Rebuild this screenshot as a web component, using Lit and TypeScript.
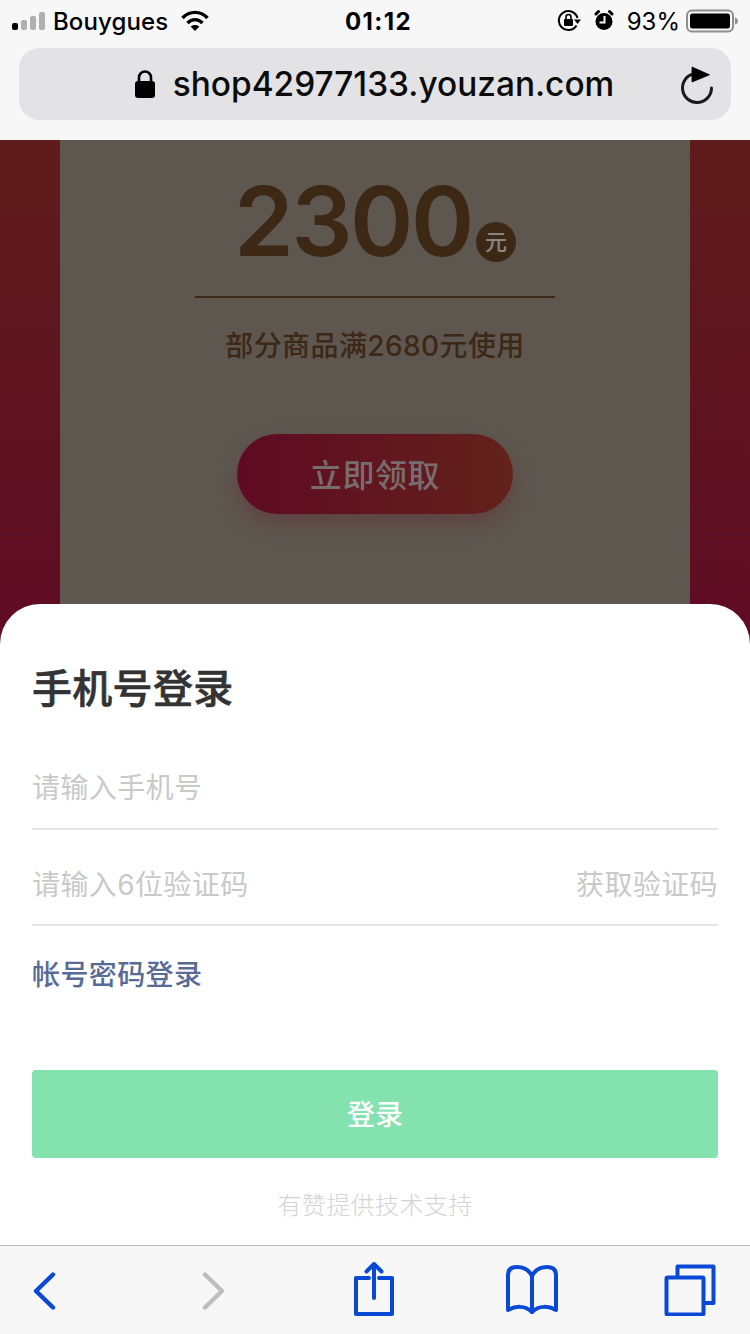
import { LitElement, html, css } from "lit";
import { customElement } from "lit/decorators.js";

@customElement("app-root")
export class AppRoot extends LitElement {
  static styles = css`
    :host { display: block; width: 750px; height: 1334px; overflow: hidden; font-family: "Inter", "Noto Sans CJK SC", sans-serif; }
    .page { position: relative; width: 750px; height: 1334px; display: flex; flex-direction: column; background: #f7f7f7; overflow: hidden; }
    .top { height: 140px; background: #f7f7f8; display: flex; flex-direction: column; flex: none; }
    .status { height: 44px; box-sizing: border-box; display: grid; grid-template-columns: 333px auto 1fr; align-items: center; padding: 0 12px 2px; font-size: 24px; color: #000; }
    .status-left, .status-right { display: flex; align-items: center; }
    .status-right { justify-content: flex-end; }
    .carrier { margin-left: 7px; font-weight: 500; letter-spacing: 0.1px; }
    .wifi { margin-left: 13px; }
    .time { font-weight: 700; font-size: 24px; letter-spacing: 1.4px; }
    .alarm { margin-left: 11px; }
    .pct { margin: 0 6px 0 13px; font-weight: 400; }
    .urlbar { margin: 4px 19px 0; height: 72px; border-radius: 20px; background: #e3e3e6; display: flex; align-items: center; position: relative; justify-content: center; padding-right: 2px; }
    .url { font-size: 33.4px; font-weight: 500; color: #0b0b0b; margin-left: 17px; }
    .reload { position: absolute; right: 15px; top: 16px; }
    .bg { background: linear-gradient(180deg, #5f1c1b 0%, #5f0c24 90%); display: flex; justify-content: center; height: 520px; flex: none; }
    .card { width: 630px; background: #5e5750; display: flex; flex-direction: column; align-items: center; color: #3c2815; }
    .amount { display: flex; align-items: flex-start; height: 156px; flex: none; }
    .num { font-size: 96px; line-height: 116px; font-weight: 600; margin-top: 23px; letter-spacing: -2.4px; }
    .yuan { width: 40px; height: 40px; border-radius: 50%; background: #3c2815; color: #8a8682; font-size: 22px; font-weight: 500; line-height: 40px; text-align: center; margin: 82px 0 0 4px; }
    .rule { width: 360px; height: 2px; background: #3c2815; flex: none; }
    .cond { font-size: 28px; line-height: 40px; margin-top: 28px; font-weight: 500; letter-spacing: 0.4px; }
    .cta { margin-top: 68px; width: 276px; height: 80px; box-sizing: border-box; padding: 0 0 3px 0; border-radius: 40px; background: linear-gradient(90deg, #5f0a24, #63221a); color: #786c6e; font-size: 32px; font-weight: 500; letter-spacing: 0.6px; display: flex; align-items: center; justify-content: center; box-shadow: 0 10px 20px rgba(100, 30, 40, 0.35); }
    .sheet { position: absolute; left: 0; right: 0; top: 604px; height: 641px; background: #fff; border-radius: 40px 40px 0 0; padding: 0 32px; box-sizing: border-box; display: flex; flex-direction: column; }
    .title { font-size: 40px; line-height: 56px; font-weight: 500; -webkit-text-stroke: 0.6px #333; color: #333; margin-top: 57px; letter-spacing: 0.3px; }
    .fields { margin-top: 17px; display: flex; flex-direction: column; }
    .field { height: 96px; border-bottom: 2px solid #e5e5e5; box-sizing: border-box; display: flex; align-items: flex-end; justify-content: space-between; font-size: 28px; color: #c9c9c9; padding-bottom: 20px; letter-spacing: 0.4px; }
    .field + .field { padding-bottom: 19px; }
    .field span { line-height: 40px; }
    .link { font-size: 28px; line-height: 40px; color: #576b95; margin-top: 29px; letter-spacing: 0.4px; font-weight: 500; }
    .btn { margin-top: 75px; height: 88px; box-sizing: border-box; padding-bottom: 2px; border-radius: 4px; background: #83e2ad; color: #fff; font-size: 28px; font-weight: 500; display: flex; align-items: center; justify-content: center; flex: none; }
    .foot { text-align: center; margin-top: 30px; font-size: 24px; line-height: 36px; font-weight: 300; color: #d4d4d4; letter-spacing: 0.4px; }
    .toolbar { position: absolute; left: 0; right: 0; bottom: 0; height: 89px; background: #f7f7f8; border-top: 1px solid #b8b8b8; box-sizing: border-box; display: flex; align-items: center; padding-left: 33px; }
    .t-back { margin-top: 2px; }
    .t-forward { margin: 2px 0 0 144px; }
    .t-share { margin: -2px 0 0 129px; }
    .t-book { margin: 0 0 0 112px; }
    .t-tabs { margin: 0 0 0 106px; }
    svg { display: block; flex: none; }
  `;

  render() {
    return html`
      <div class="page">
        <div class="top">
          <div class="status">
            <div class="status-left">
              <svg width="34" height="20" viewBox="0 0 34 20">
                <rect x="0" y="12" width="6" height="7" rx="2" fill="#000"/>
                <rect x="9" y="9" width="6" height="10" rx="2" fill="#b0b0b0"/>
                <rect x="18" y="5" width="6" height="14" rx="2" fill="#b0b0b0"/>
                <rect x="27" y="1" width="6" height="18" rx="2" fill="#b0b0b0"/>
              </svg>
              <span class="carrier">Bouygues</span>
              <svg class="wifi" width="28" height="22" viewBox="0 0 28 22" fill="none" stroke="#000" stroke-width="3.4">
                <path d="M1.5 8 C8.5 0.5 19.5 0.5 26.5 8"/>
                <path d="M6.5 13 C11 8.5 17 8.5 21.5 13"/>
                <path d="M14 21 L9.6 16.6 C12 14.4 16 14.4 18.4 16.6 Z" fill="#000" stroke="none"/>
              </svg>
            </div>
            <div class="time">01:12</div>
            <div class="status-right">
              <svg width="24" height="24" viewBox="0 0 24 24" fill="none" stroke="#000" stroke-width="2">
                <path d="M19.5 16.5 A9.5 9.5 0 1 1 20.5 9"/>
                <path d="M17 10.5 L24 10.5 L20.5 15 Z" fill="#000" stroke="none"/>
                <rect x="7" y="10" width="9" height="7" rx="1" fill="#000" stroke="none"/>
                <path d="M9 10 V8 A2.5 2.5 0 0 1 14 8 V10" stroke-width="1.6"/>
              </svg>
              <svg class="alarm" width="22" height="24" viewBox="0 0 22 24">
                <circle cx="12" cy="12.5" r="8.5" fill="#000"/>
                <path d="M4 5 L6.5 2.5 M20 5 L17.5 2.5" stroke="#000" stroke-width="3" stroke-linecap="round"/>
                <path d="M12.5 7 V13.5 H7.5" fill="none" stroke="#f7f7f8" stroke-width="2"/>
              </svg>
              <span class="pct">93%</span>
              <svg width="52" height="24" viewBox="0 0 52 24">
                <rect x="1" y="1.5" width="46" height="21" rx="5" fill="none" stroke="#8e8e8e" stroke-width="2"/>
                <rect x="4" y="4.5" width="40" height="15" rx="2.5" fill="#000"/>
                <path d="M49 8.5 C51 9 52 10.5 52 12 C52 13.5 51 15 49 15.5 Z" fill="#8e8e8e"/>
              </svg>
            </div>
          </div>
          <div class="urlbar">
            <svg width="22" height="28" viewBox="0 0 22 28">
              <rect x="1" y="11" width="20" height="17" rx="3" fill="#000"/>
              <path d="M5 12 V7.5 A6 6 0 0 1 17 7.5 V12" fill="none" stroke="#000" stroke-width="2.6"/>
            </svg>
            <span class="url">shop42977133.youzan.com</span>
            <svg class="reload" width="36" height="42" viewBox="0 0 36 42" fill="none">
              <path d="M14 9.8 A14.5 14.5 0 1 0 31.5 24" stroke="#1a1a1a" stroke-width="3" stroke-linecap="round"/>
              <path d="M12 3 L29.5 10.8 L12 18 Z" fill="#000" stroke="#000" stroke-width="0.8" stroke-linejoin="round"/>
            </svg>
          </div>
        </div>
        <div class="bg">
          <div class="card">
            <div class="amount">
              <span class="num">2300</span>
              <span class="yuan">元</span>
            </div>
            <div class="rule"></div>
            <div class="cond">部分商品满2680元使用</div>
            <div class="cta">立即领取</div>
          </div>
        </div>
        <div class="sheet">
          <div class="title">手机号登录</div>
          <div class="fields">
            <div class="field"><span>请输入手机号</span></div>
            <div class="field"><span>请输入6位验证码</span><span>获取验证码</span></div>
          </div>
          <div class="link">帐号密码登录</div>
          <div class="btn">登录</div>
          <div class="foot">有赞提供技术支持</div>
        </div>
        <div class="toolbar">
          <svg class="t-back" width="24" height="38" viewBox="0 0 24 38" fill="none" stroke="#0a49d6" stroke-width="4.4" stroke-linecap="round" stroke-linejoin="round"><path d="M20 2.5 L3 19 L20 35.5"/></svg>
          <svg class="t-forward" width="24" height="38" viewBox="0 0 24 38" fill="none" stroke="#bdbdbd" stroke-width="4.4" stroke-linecap="round" stroke-linejoin="round"><path d="M4 2.5 L21 19 L4 35.5"/></svg>
          <svg class="t-share" width="40" height="54" viewBox="0 0 40 54" fill="none" stroke="#0a49d6" stroke-width="4" stroke-linejoin="round" stroke-linecap="round"><path d="M15 16 H2 V52 H38 V16 H25"/><path d="M20 36 V3"/><path d="M12.5 9.5 L20 2 L27.5 9.5"/></svg>
          <svg class="t-book" width="52" height="50" viewBox="0 0 52 50" fill="none" stroke="#0a49d6" stroke-width="4" stroke-linejoin="round" stroke-linecap="round"><path d="M26 11 C23 5 17 2 11 2 C5 2 2 5 2 10 V45 C9 41 19 40 26 47 C33 40 43 41 50 45 V10 C50 5 47 2 41 2 C35 2 29 5 26 11 Z"/><path d="M26 11 V47"/></svg>
          <svg class="t-tabs" width="52" height="52" viewBox="0 0 52 52" fill="none" stroke="#0a49d6" stroke-width="4" stroke-linejoin="round" stroke-linecap="round"><rect x="2.5" y="13.5" width="37" height="37" rx="1"/><path d="M13.5 12 V2.5 H49.5 V39 H41"/></svg>
        </div>
      </div>
    `;
  }
}
